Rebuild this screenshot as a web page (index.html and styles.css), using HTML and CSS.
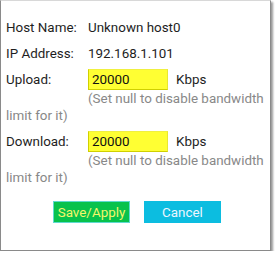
FILE: index.html
```html
<!DOCTYPE html>
<html>
<head>
<meta charset="utf-8">
<link rel="stylesheet" href="styles.css">
</head>
<body>
<div class="dlg">
  <div class="row"><span class="lbl">Host Name:</span><span>Unknown host0</span></div>
  <div class="row"><span class="lbl">IP Address:</span><span>192.168.1.101</span></div>
  <div class="rate"><span class="lbl">Upload:</span><input class="num" type="text" value="20000"><span class="unit">Kbps</span></div>
  <div class="hint">(Set null to disable bandwidth limit for it)</div>
  <div class="rate"><span class="lbl">Download:</span><input class="num" type="text" value="20000"><span class="unit">Kbps</span></div>
  <div class="hint">(Set null to disable bandwidth limit for it)</div>
  <div class="btns">
    <button class="btn save">Save/Apply</button>
    <button class="btn cancel">Cancel</button>
  </div>
</div>
</body>
</html>
```
FILE: styles.css
```css
html, body {
  margin: 0;
  padding: 0;
  background: #ffffff;
}
.dlg {
  box-sizing: border-box;
  width: 271px;
  height: 251px;
  border: 1px solid #8a8a8a;
  border-top-color: #d8d8d8;
  box-shadow: 2px 2px 2px #9a9a9a;
  padding: 13px 3px 0 5px;
  font-family: Roboto, "Noto Sans", sans-serif;
  font-size: 13.4px;
  color: #1e1e1e;
}
.row {
  display: flex;
  align-items: center;
  height: 26px;
}
.rate {
  display: flex;
  align-items: center;
  height: 21px;
  margin-top: 3px;
}
.hint + .rate {
  margin-top: 7px;
}
.lbl {
  display: inline-block;
  width: 82px;
  flex: none;
}
.num {
  box-sizing: border-box;
  width: 80px;
  height: 21px;
  margin: 0;
  padding: 0 0 0 3px;
  background: #ffff33;
  border: 1px solid #d0d000;
  border-top-color: #f0f040;
  border-right-color: #e8e830;
  font-family: Roboto, "Noto Sans", sans-serif;
  font-size: 13.4px;
  color: #111111;
  outline: none;
}
.unit {
  margin-left: 8px;
}
.hint {
  text-indent: 82px;
  line-height: 17px;
  color: #888888;
}
.btns {
  display: flex;
  justify-content: center;
  gap: 14px;
  margin-top: 15px;
  padding-left: 1px;
}
.btn {
  box-sizing: border-box;
  width: 77px;
  height: 22px;
  padding: 0;
  font-family: Roboto, "Noto Sans", sans-serif;
  font-size: 13.4px;
  cursor: pointer;
}
.save {
  background: #08c24c;
  border: 1px solid #5fd9d0;
  color: #f4f66a;
}
.cancel {
  background: #0cbde0;
  border: 1px solid #0cbde0;
  color: #eef6ff;
}
```
